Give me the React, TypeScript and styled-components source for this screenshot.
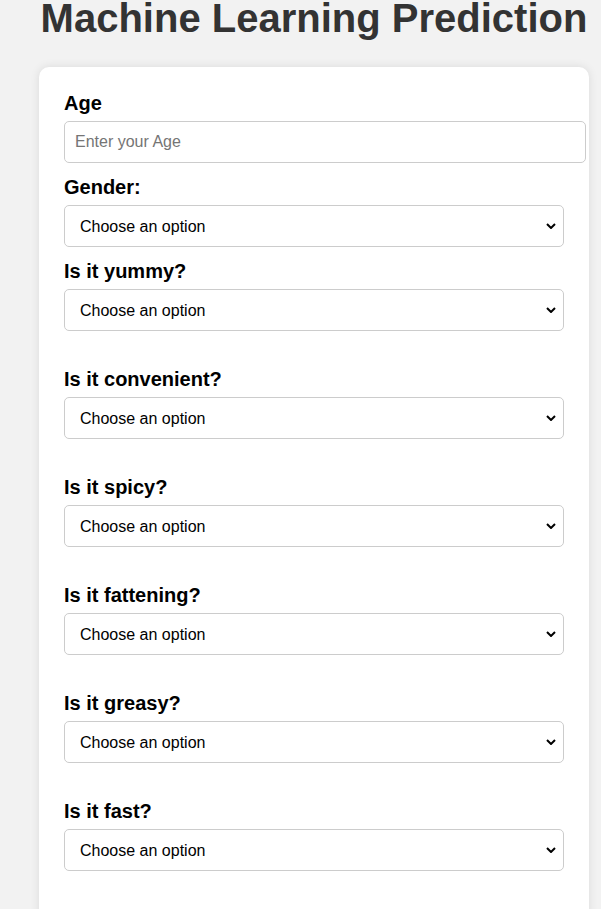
import styled, { createGlobalStyle } from "styled-components";

const GlobalStyle = createGlobalStyle`
  body {
    margin: 0;
    background: #f2f2f2;
    font-family: "Liberation Sans", Arial, sans-serif;
  }
`;

const Page = styled.div`
  padding-left: 39px;
`;

const Title = styled.h1`
  width: 550px;
  margin: -2px 0 29px;
  font-size: 40px;
  line-height: 40px;
  font-weight: bold;
  color: #333;
  text-align: center;
  white-space: nowrap;
`;

const Card = styled.form`
  width: 500px;
  padding: 25px 25px 80px;
  background: #fff;
  border-radius: 10px;
  box-shadow: 0 0 10px rgba(0, 0, 0, 0.1);
`;

// spaced groups get an extra gap above (margins collapse, so 13 + 24)
const Field = styled.div<{ $spaced?: boolean }>`
  margin-top: ${(p) => (p.$spaced ? "37px" : "0")};
  margin-bottom: 13px;
`;

const Label = styled.label`
  display: block;
  margin-bottom: 6px;
  font-size: 20px;
  line-height: 23px;
  font-weight: bold;
  color: #000;
`;

const TextInput = styled.input`
  display: block;
  box-sizing: content-box;
  width: 100%;
  height: 20px;
  padding: 10px;
  border: 1px solid #ccc;
  border-radius: 5px;
  font-family: inherit;
  font-size: 16px;
  color: #000;
  outline: none;

  &::placeholder {
    color: #757575;
  }
`;

const SelectWrap = styled.div`
  position: relative;
`;

const Select = styled.select`
  display: block;
  box-sizing: border-box;
  width: 100%;
  height: 42px;
  padding: 0 15px;
  border: 1px solid #ccc;
  border-radius: 5px;
  background: #fff;
  font-family: inherit;
  font-size: 16px;
  color: #000;
  appearance: none;
  outline: none;
`;

const Chevron = styled.svg`
  position: absolute;
  right: 8px;
  top: 50%;
  width: 10px;
  height: 6px;
  transform: translateY(-50%);
  pointer-events: none;
`;

const questions = [
  { id: "gender", label: "Gender:" },
  { id: "yummy", label: "Is it yummy?" },
  { id: "convenient", label: "Is it convenient?", spaced: true },
  { id: "spicy", label: "Is it spicy?", spaced: true },
  { id: "fattening", label: "Is it fattening?", spaced: true },
  { id: "greasy", label: "Is it greasy?", spaced: true },
  { id: "fast", label: "Is it fast?", spaced: true },
];

function Dropdown({ id }: { id: string }) {
  return (
    <SelectWrap>
      <Select id={id} defaultValue="">
        <option value="">Choose an option</option>
        <option value="yes">Yes</option>
        <option value="no">No</option>
      </Select>
      <Chevron viewBox="0 0 10 6">
        <path d="M1 1 L5 5 L9 1" fill="none" stroke="#000" strokeWidth="2" />
      </Chevron>
    </SelectWrap>
  );
}

export default function App() {
  return (
    <Page>
      <GlobalStyle />
      <Title>Machine Learning Prediction</Title>
      <Card onSubmit={(e) => e.preventDefault()}>
        <Field>
          <Label htmlFor="age">Age</Label>
          <TextInput id="age" type="number" placeholder="Enter your Age" />
        </Field>
        {questions.map((q) => (
          <Field key={q.id} $spaced={q.spaced}>
            <Label htmlFor={q.id}>{q.label}</Label>
            <Dropdown id={q.id} />
          </Field>
        ))}
      </Card>
    </Page>
  );
}
